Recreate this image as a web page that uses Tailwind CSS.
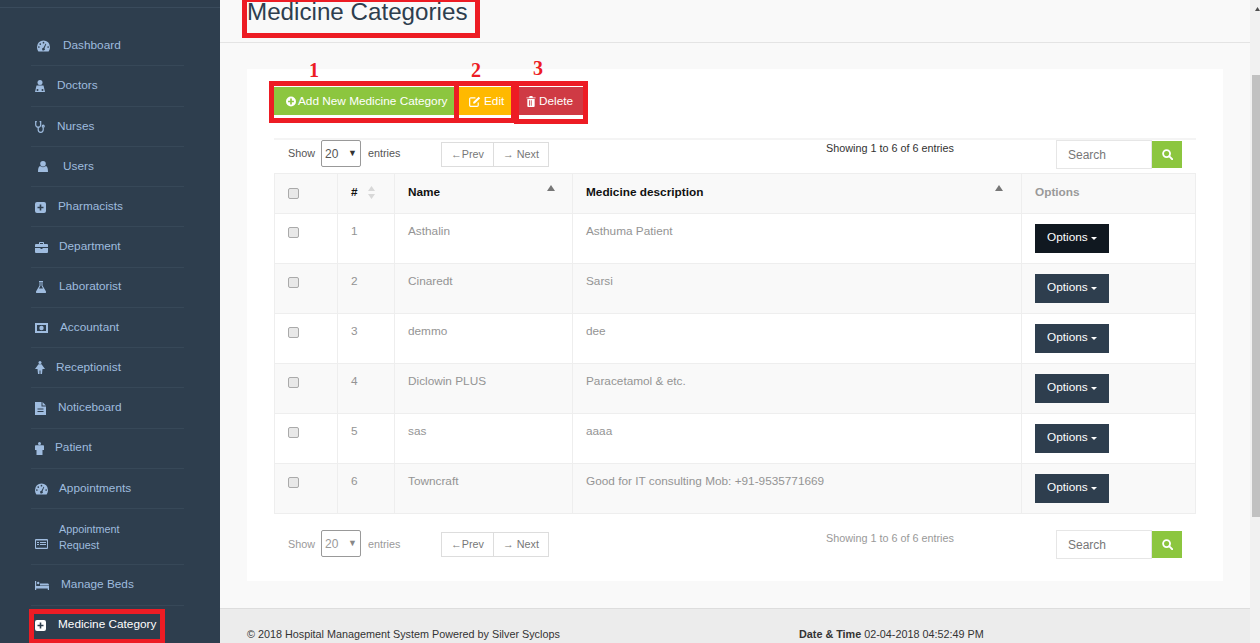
<!DOCTYPE html>
<html lang="en">
<head>
  <meta charset="UTF-8">
  <title>Medicine Categories</title>
  <script src="https://cdn.jsdelivr.net/npm/@tailwindcss/browser@4"></script>
</head>
<body class="h-[643px] overflow-hidden bg-[#f9f9f9] font-['Liberation_Sans',sans-serif] text-[11.8px] text-[#949494]">
  <div class="flex h-[643px]">

    <!-- Sidebar -->
    <aside class="relative w-[220px] shrink-0 bg-[#2e3e4e] text-[#9fbcdf]">
      <div class="h-[8px] border-b border-[#3a4b5c]"></div>
      <ul class="mt-[17px] ml-[31px] w-[153px]">
        <li class="flex h-[41px] items-center border-b border-[#374858] pt-[1px] pl-[6px]">
          <svg class="mr-[13px] h-[12px] w-[13px]" viewBox="0 0 14 12" fill="currentColor"><path fill-rule="evenodd" d="M7 0a7 7 0 0 0-7 7c0 2 .6 3.500 1.500 5h11c.9-1.500 1.500-3 1.500-5a7 7 0 0 0-7-7zM2 6.200a.9.9 0 1 0 0 1.800.9.9 0 0 0 0-1.800zM3.500 3a.9.9 0 1 0 0 1.800.9.9 0 0 0 0-1.800zM7 1.500a.9.9 0 1 0 0 1.800.9.9 0 0 0 0-1.800zM12 6.200a.9.9 0 1 0 0 1.800.9.9 0 0 0 0-1.800zM9.200 3.500 7 7.800a1.500 1.500 0 1 0 1.100.5l1.900-4.500z"/></svg>
          Dashboard
        </li>
        <li class="flex h-[41px] items-center border-b border-[#374858] pl-[4px]">
          <svg class="mr-[12px] h-[12px] w-[10px]" viewBox="0 0 10 12" fill="currentColor"><circle cx="5" cy="2.500" r="2.500"/><path fill-rule="evenodd" d="M1.500 5.500h7L10 12H0zM2.500 9a1 1 0 1 0 0 2 1 1 0 0 0 0-2zm5 0a1 1 0 1 0 0 2 1 1 0 0 0 0-2z"/></svg>
          Doctors
        </li>
        <li class="flex h-[40px] items-center border-b border-[#374858] pl-[4px]">
          <svg class="mr-[12px] h-[12px] w-[10px]" viewBox="0 0 10 12" fill="none" stroke="currentColor" stroke-width="1.200"><path d="M1.800 .7H.7v3a2.500 2.500 0 0 0 5 0v-3H4.600M3.200 6.300v2.500a2.500 2.500 0 0 0 5 0V6.500"/><circle cx="8.200" cy="5.200" r="1"/></svg>
          Nurses
        </li>
        <li class="flex h-[40px] items-center border-b border-[#374858] pl-[7px]">
          <svg class="mr-[15px] h-[11px] w-[10px]" viewBox="0 0 10 11" fill="currentColor"><circle cx="5" cy="2.800" r="2.800"/><path d="M2 5c1.500 1.500 4.500 1.500 6 0 1.500.5 2 2.500 2 6H0c0-3.500.5-5.500 2-6z"/></svg>
          Users
        </li>
        <li class="flex h-[40px] items-center border-b border-[#374858] pt-[1px] pl-[4px]">
          <svg class="mr-[12px] h-[11px] w-[11px]" viewBox="0 0 11 11" fill="currentColor"><path fill-rule="evenodd" d="M2 0h7a2 2 0 0 1 2 2v7a2 2 0 0 1-2 2H2a2 2 0 0 1-2-2V2a2 2 0 0 1 2-2zm2.700 2.500v2.200H2.500v1.600h2.200v2.200h1.600V6.300h2.200V4.700H6.300V2.500z"/></svg>
          Pharmacists
        </li>
        <li class="flex h-[41px] items-center border-b border-[#374858] pl-[4px]">
          <svg class="mr-[11px] h-[11px] w-[13px]" viewBox="0 0 13 11" fill="currentColor"><path fill-rule="evenodd" d="M4 2V.8C4 .4 4.400 0 4.800 0h3.400C8.600 0 9 .4 9 .8V2h3a1 1 0 0 1 1 1v2H0V3a1 1 0 0 1 1-1zm1 0h3V1H5zM0 6h5.500v1h2V6H13v4a1 1 0 0 1-1 1H1a1 1 0 0 1-1-1z"/></svg>
          Department
        </li>
        <li class="flex h-[40px] items-center border-b border-[#374858] pb-[1px] pl-[5px]">
          <svg class="mr-[13px] h-[12px] w-[10px]" viewBox="0 0 10 12" fill="currentColor"><path fill-rule="evenodd" d="M3 0h4v1h-.5v3.500L10 10.500c.3.800-.2 1.500-1 1.500H1c-.8 0-1.300-.7-1-1.500L3.500 4.500V1H3zm1.500 1v3.800L3 7.500h4L5.500 4.800V1z"/></svg>
          Laboratorist
        </li>
        <li class="flex h-[40px] items-center border-b border-[#374858] pl-[4px]">
          <svg class="mr-[12px] h-[10px] w-[13px]" viewBox="0 0 13 10" fill="currentColor"><path fill-rule="evenodd" d="M0 0h13v10H0zm2 2v6h9V2zm4.500 .8a2.200 2.200 0 1 1 0 4.400 2.200 2.200 0 0 1 0-4.400z"/></svg>
          Accountant
        </li>
        <li class="flex h-[40px] items-center border-b border-[#374858] pl-[4px]">
          <svg class="mr-[11px] h-[13px] w-[10px]" viewBox="0 0 10 13" fill="currentColor"><circle cx="5" cy="1.500" r="1.500"/><path d="M3.500 3.300h3L10 8H7.500l-.5 5H5.500V9.500h-1V13H3l-.5-5H0z"/></svg>
          Receptionist
        </li>
        <li class="flex h-[41px] items-center border-b border-[#374858] pl-[4px]">
          <svg class="mr-[12px] h-[13px] w-[11px]" viewBox="0 0 11 13" fill="currentColor"><path fill-rule="evenodd" d="M0 0h6.500v4.500H11V13H0zm7.500 0L11 3.500H7.500zM2.500 6.500v1h6v-1zm0 2.500v1h6V9z"/></svg>
          Noticeboard
        </li>
        <li class="flex h-[40px] items-center border-b border-[#374858] pb-[1px] pl-[4px]">
          <svg class="mr-[11px] h-[13px] w-[9px]" viewBox="0 0 9 13" fill="currentColor"><circle cx="4.500" cy="1.500" r="1.500"/><path d="M1 3.300h7c.6 0 1 .4 1 1V8H7.500v5h-6V8H0V4.300c0-.6.400-1 1-1z"/></svg>
          Patient
        </li>
        <li class="flex h-[40px] items-center border-b border-[#374858] pl-[4px]">
          <svg class="mr-[11px] h-[12px] w-[13px]" viewBox="0 0 14 12" fill="currentColor"><path fill-rule="evenodd" d="M7 0a7 7 0 0 0-7 7c0 2 .6 3.500 1.500 5h11c.9-1.500 1.500-3 1.500-5a7 7 0 0 0-7-7zM2 6.200a.9.9 0 1 0 0 1.800.9.9 0 0 0 0-1.800zM3.500 3a.9.9 0 1 0 0 1.800.9.9 0 0 0 0-1.800zM7 1.500a.9.9 0 1 0 0 1.800.9.9 0 0 0 0-1.800zM12 6.200a.9.9 0 1 0 0 1.800.9.9 0 0 0 0-1.800zM9.200 3.500 7 7.800a1.500 1.500 0 1 0 1.100.5l1.900-4.500z"/></svg>
          Appointments
        </li>
        <li class="flex h-[56px] items-center border-b border-[#374858] pl-[4px] text-[10.8px] leading-[16px]">
          <svg class="mt-[15px] mr-[11px] h-[10px] w-[13px]" viewBox="0 0 13 10" fill="currentColor"><path fill-rule="evenodd" d="M1 0h11a1 1 0 0 1 1 1v8a1 1 0 0 1-1 1H1a1 1 0 0 1-1-1V1a1 1 0 0 1 1-1zm0 1.500v7.200h11V1.500zM2 3h2v1H2zm3 0h6v1H5zM2 5h2v1H2zm3 0h6v1H5z"/></svg>
          <span class="pt-[1px]">Appointment<br>Request</span>
        </li>
        <li class="flex h-[41px] items-center border-b border-[#374858] pl-[4px]">
          <svg class="mr-[12px] h-[9px] w-[14px]" viewBox="0 0 14 9" fill="currentColor"><path d="M0 0h1.200v5H14v4h-1.200V7.500H1.200V9H0zM2 2a1.200 1.200 0 1 1 2.400 0A1.200 1.200 0 0 1 2 2zm3 .5h7.500c.8 0 1.500.7 1.500 1.500v.5H5z"/></svg>
          Manage Beds
        </li>
        <li class="flex h-[38px] items-center pl-[4px] text-white">
          <svg class="mr-[12px] h-[11px] w-[11px]" viewBox="0 0 11 11" fill="currentColor"><path fill-rule="evenodd" d="M2 0h7a2 2 0 0 1 2 2v7a2 2 0 0 1-2 2H2a2 2 0 0 1-2-2V2a2 2 0 0 1 2-2zm2.700 2.500v2.200H2.500v1.600h2.200v2.200h1.600V6.300h2.200V4.700H6.300V2.500z"/></svg>
          Medicine Category
        </li>
      </ul>
      <!-- annotation box -->
      <div class="absolute top-[609px] left-[29px] h-[34px] w-[136px] border-[5px] border-b-[4px] border-[#ed1c24]"></div>
    </aside>

    <!-- Main -->
    <main class="relative flex min-w-0 flex-1 flex-col">
      <header class="h-[43px] shrink-0 border-b border-[#e4e4e4] pl-[27px]">
        <h1 class="text-[24.2px] leading-[24px] text-[#2e3e4e]">Medicine Categories</h1>
      </header>

      <section class="mx-[27px] mt-[26px] h-[512px] bg-white pt-[18px] pl-[27px]">
        <div class="flex h-[30px] items-start">
          <button class="flex h-[28px] w-[180px] items-center bg-[#8cc63f] pt-[1px] pl-[12px] text-white">
            <svg class="mr-[2px] h-[11px] w-[10px]" viewBox="0 0 12 12" fill="currentColor"><path fill-rule="evenodd" d="M6 0a6 6 0 1 1 0 12A6 6 0 0 1 6 0zM5 2.500V5H2.500v2H5v2.500h2V7h2.500V5H7V2.500z"/></svg>
            Add New Medicine Category
          </button>
          <button class="ml-[5px] flex h-[28px] w-[52px] items-center bg-[#ffb900] pt-[1px] pl-[10px] text-white">
            <svg class="mr-[3px] mb-[1px] h-[11px] w-[12px]" viewBox="0 0 13 12" fill="none" stroke="currentColor" stroke-width="1.300"><path d="M10 7v3a1.300 1.300 0 0 1-1.300 1.300H2A1.300 1.300 0 0 1 .7 10V3.300A1.300 1.300 0 0 1 2 2h5"/><path d="M4.500 6.500 10.500 .8l1.700 1.700-6 5.800H4.500z" fill="currentColor" stroke="none"/></svg>
            Edit
          </button>
          <button class="ml-[8px] flex h-[28px] w-[64px] items-center bg-[#cf3a44] pt-[1px] pl-[7px] text-white">
            <svg class="mr-[3px] mb-[1px] h-[11px] w-[10px]" viewBox="0 0 10 12" fill="currentColor"><path fill-rule="evenodd" d="M3.500 0h3l.5 1.500h3v1H0v-1h3zM1 3.200h8V11a1 1 0 0 1-1 1H2a1 1 0 0 1-1-1zm1.800 1.300v6h.9v-6zm2 0v6h.9v-6z"/></svg>
            Delete
          </button>
        </div>

        <div class="mt-[21px] mr-[27px] border-t-2 border-[#f4f4f4]"></div>

        <!-- top table controls -->
        <div class="relative h-[33px] text-[10.8px] text-[#555]">
          <span class="absolute top-[5px] left-[14px]">Show</span>
          <div class="absolute top-0 left-[47px] flex h-[27px] w-[40px] items-center justify-between rounded-[2px] border border-[#999] px-[3px] text-[12px]">20<span class="text-[9px] text-[#333]">▼</span></div>
          <span class="absolute top-[5px] left-[94px]">entries</span>
          <div class="absolute top-[2px] left-[167px] flex h-[25px] w-[108px] border border-[#ddd] text-[#777]">
            <span class="flex w-[52px] items-center justify-center border-r border-[#ddd]">←Prev</span>
            <span class="flex flex-1 items-center justify-center">→ Next</span>
          </div>
          <span class="absolute top-0 left-[552px] text-[#333]">Showing 1 to 6 of 6 entries</span>
          <div class="absolute top-0 left-[782px] flex">
            <div class="flex h-[29px] w-[96px] items-center border border-[#e6e6e6] pl-[11px] text-[12px] text-[#777]">Search</div>
            <div class="mt-[1px] flex h-[27px] w-[30px] items-center justify-center bg-[#8cc63f]">
              <svg class="h-[11px] w-[11px]" viewBox="0 0 12 12" fill="none" stroke="white" stroke-width="2"><circle cx="5" cy="5" r="3.800"/><path d="m8 8 3.200 3.200" stroke-linecap="round"/></svg>
            </div>
          </div>
        </div>

        <table class="w-[921px] table-fixed border-collapse">
          <colgroup>
            <col class="w-[63px]"><col class="w-[57px]"><col class="w-[178px]"><col class="w-[449px]"><col class="w-[174px]">
          </colgroup>
          <thead>
            <tr class="h-[40px] bg-[#f9f9f9]">
              <th class="border border-[#eee] pl-[13px] text-left"><input type="checkbox" class="h-[11px] w-[11px] appearance-none rounded-[2px] border border-[#aaa] bg-[#e8e8e8] align-middle"></th>
              <th class="border border-[#eee] pb-[2px] pl-[13px] text-left font-bold text-[#111]"><span class="flex items-center gap-[10px]">#<svg class="h-[13px] w-[7px]" viewBox="0 0 7 13" fill="#d8d8d8"><path d="M3.500 0 7 5H0zM3.500 13 0 8h7z"/></svg></span></th>
              <th class="relative border border-[#eee] pb-[2px] pl-[13px] text-left font-bold text-[#111]">Name<svg class="absolute top-[11px] right-[17px] h-[6px] w-[8px]" viewBox="0 0 8 6" fill="#777"><path d="M4 0l4 6H0z"/></svg></th>
              <th class="relative border border-[#eee] pb-[2px] pl-[13px] text-left font-bold text-[#111]">Medicine description<svg class="absolute top-[11px] right-[18px] h-[6px] w-[8px]" viewBox="0 0 8 6" fill="#777"><path d="M4 0l4 6H0z"/></svg></th>
              <th class="border border-[#eee] pb-[2px] pl-[13px] text-left font-bold text-[#999]">Options</th>
            </tr>
          </thead>
          <tbody>
            <tr class="h-[50px]">
              <td class="border border-[#eee] pb-[12px] pl-[13px]"><input type="checkbox" class="h-[11px] w-[11px] appearance-none rounded-[2px] border border-[#aaa] bg-[#e8e8e8] align-middle"></td>
              <td class="border border-[#eee] pb-[14px] pl-[13px]">1</td>
              <td class="border border-[#eee] pb-[14px] pl-[13px]">Asthalin</td>
              <td class="border border-[#eee] pb-[14px] pl-[13px]">Asthuma Patient</td>
              <td class="border border-[#eee] pl-[13px]"><button class="h-[29px] w-[74px] bg-[#101820] pb-[1px] text-white">Options <span class="inline-block h-0 w-0 border-x-[3px] border-t-[3px] border-x-transparent border-t-white align-middle"></span></button></td>
            </tr>
            <tr class="h-[50px] bg-[#f9f9f9]">
              <td class="border border-[#eee] pb-[12px] pl-[13px]"><input type="checkbox" class="h-[11px] w-[11px] appearance-none rounded-[2px] border border-[#aaa] bg-[#e8e8e8] align-middle"></td>
              <td class="border border-[#eee] pb-[14px] pl-[13px]">2</td>
              <td class="border border-[#eee] pb-[14px] pl-[13px]">Cinaredt</td>
              <td class="border border-[#eee] pb-[14px] pl-[13px]">Sarsi</td>
              <td class="border border-[#eee] pl-[13px]"><button class="h-[29px] w-[74px] bg-[#2e3e4e] pb-[1px] text-white">Options <span class="inline-block h-0 w-0 border-x-[3px] border-t-[3px] border-x-transparent border-t-white align-middle"></span></button></td>
            </tr>
            <tr class="h-[50px]">
              <td class="border border-[#eee] pb-[12px] pl-[13px]"><input type="checkbox" class="h-[11px] w-[11px] appearance-none rounded-[2px] border border-[#aaa] bg-[#e8e8e8] align-middle"></td>
              <td class="border border-[#eee] pb-[14px] pl-[13px]">3</td>
              <td class="border border-[#eee] pb-[14px] pl-[13px]">demmo</td>
              <td class="border border-[#eee] pb-[14px] pl-[13px]">dee</td>
              <td class="border border-[#eee] pl-[13px]"><button class="h-[29px] w-[74px] bg-[#2e3e4e] pb-[1px] text-white">Options <span class="inline-block h-0 w-0 border-x-[3px] border-t-[3px] border-x-transparent border-t-white align-middle"></span></button></td>
            </tr>
            <tr class="h-[50px] bg-[#f9f9f9]">
              <td class="border border-[#eee] pb-[12px] pl-[13px]"><input type="checkbox" class="h-[11px] w-[11px] appearance-none rounded-[2px] border border-[#aaa] bg-[#e8e8e8] align-middle"></td>
              <td class="border border-[#eee] pb-[14px] pl-[13px]">4</td>
              <td class="border border-[#eee] pb-[14px] pl-[13px]">Diclowin PLUS</td>
              <td class="border border-[#eee] pb-[14px] pl-[13px]">Paracetamol &amp; etc.</td>
              <td class="border border-[#eee] pl-[13px]"><button class="h-[29px] w-[74px] bg-[#2e3e4e] pb-[1px] text-white">Options <span class="inline-block h-0 w-0 border-x-[3px] border-t-[3px] border-x-transparent border-t-white align-middle"></span></button></td>
            </tr>
            <tr class="h-[50px]">
              <td class="border border-[#eee] pb-[12px] pl-[13px]"><input type="checkbox" class="h-[11px] w-[11px] appearance-none rounded-[2px] border border-[#aaa] bg-[#e8e8e8] align-middle"></td>
              <td class="border border-[#eee] pb-[14px] pl-[13px]">5</td>
              <td class="border border-[#eee] pb-[14px] pl-[13px]">sas</td>
              <td class="border border-[#eee] pb-[14px] pl-[13px]">aaaa</td>
              <td class="border border-[#eee] pl-[13px]"><button class="h-[29px] w-[74px] bg-[#2e3e4e] pb-[1px] text-white">Options <span class="inline-block h-0 w-0 border-x-[3px] border-t-[3px] border-x-transparent border-t-white align-middle"></span></button></td>
            </tr>
            <tr class="h-[50px] bg-[#f9f9f9]">
              <td class="border border-[#eee] pb-[12px] pl-[13px]"><input type="checkbox" class="h-[11px] w-[11px] appearance-none rounded-[2px] border border-[#aaa] bg-[#e8e8e8] align-middle"></td>
              <td class="border border-[#eee] pb-[14px] pl-[13px]">6</td>
              <td class="border border-[#eee] pb-[14px] pl-[13px]">Towncraft</td>
              <td class="border border-[#eee] pb-[14px] pl-[13px]">Good for IT consulting Mob: +91-9535771669</td>
              <td class="border border-[#eee] pl-[13px]"><button class="h-[29px] w-[74px] bg-[#2e3e4e] pb-[1px] text-white">Options <span class="inline-block h-0 w-0 border-x-[3px] border-t-[3px] border-x-transparent border-t-white align-middle"></span></button></td>
            </tr>
          </tbody>
        </table>

        <!-- bottom table controls -->
        <div class="relative mt-[16px] h-[34px] text-[10.8px] text-[#999]">
          <span class="absolute top-[6px] left-[14px]">Show</span>
          <div class="absolute top-0 left-[47px] flex h-[27px] w-[40px] items-center justify-between rounded-[2px] border border-[#999] px-[3px] text-[12px]">20<span class="text-[9px] text-[#888]">▼</span></div>
          <span class="absolute top-[6px] left-[94px]">entries</span>
          <div class="absolute top-[2px] left-[167px] flex h-[25px] w-[108px] border border-[#ddd] text-[#777]">
            <span class="flex w-[52px] items-center justify-center border-r border-[#ddd]">←Prev</span>
            <span class="flex flex-1 items-center justify-center">→ Next</span>
          </div>
          <span class="absolute top-0 left-[552px]">Showing 1 to 6 of 6 entries</span>
          <div class="absolute top-0 left-[782px] flex">
            <div class="flex h-[29px] w-[96px] items-center border border-[#e6e6e6] pl-[11px] text-[12px] text-[#777]">Search</div>
            <div class="mt-[1px] flex h-[27px] w-[30px] items-center justify-center bg-[#8cc63f]">
              <svg class="h-[11px] w-[11px]" viewBox="0 0 12 12" fill="none" stroke="white" stroke-width="2"><circle cx="5" cy="5" r="3.800"/><path d="m8 8 3.200 3.200" stroke-linecap="round"/></svg>
            </div>
          </div>
        </div>
      </section>

      <footer class="mt-[27px] flex h-[35px] shrink-0 border-t border-[#ddd] bg-[#ececec] pt-[19px] pl-[27px] text-[10.8px] leading-[13px] text-[#333]">
        <span class="w-[552px]">© 2018 Hospital Management System Powered by Silver Syclops</span>
        <span><b>Date &amp; Time</b> 02-04-2018 04:52:49 PM</span>
      </footer>

      <!-- red annotations drawn over the page -->
      <div class="absolute top-[-3px] left-[22px] h-[41px] w-[238px] border-[5px] border-[#ed1c24]"></div>
      <div class="absolute top-[81px] left-[49px] h-[42px] w-[190px] border-[5px] border-[#ed1c24]"></div>
      <div class="absolute top-[81px] left-[234px] h-[42px] w-[62px] border-[5px] border-[#ed1c24]"></div>
      <div class="absolute top-[81px] left-[294px] h-[43px] w-[74px] border-[5px] border-[#ed1c24]"></div>
      <span class="absolute top-[58px] left-[89px] font-['Liberation_Serif',serif] text-[20px] leading-[24px] font-bold text-[#ed1c24]">1</span>
      <span class="absolute top-[58px] left-[251px] font-['Liberation_Serif',serif] text-[20px] leading-[24px] font-bold text-[#ed1c24]">2</span>
      <span class="absolute top-[56px] left-[313px] font-['Liberation_Serif',serif] text-[20px] leading-[24px] font-bold text-[#ed1c24]">3</span>
    </main>

    <!-- Scrollbar -->
    <div class="flex w-[10px] shrink-0 flex-col bg-[#f1f1f1] pl-[2px]">
      <div class="h-[75px] pt-[7px] pl-[3px]">
        <svg class="h-[4px] w-[5px]" viewBox="0 0 5 4" fill="#505050"><path d="M2.500 0 5 4H0z"/></svg>
      </div>
      <div class="h-[442px] bg-[#c1c1c1]"></div>
    </div>
  </div>
</body>
</html>
